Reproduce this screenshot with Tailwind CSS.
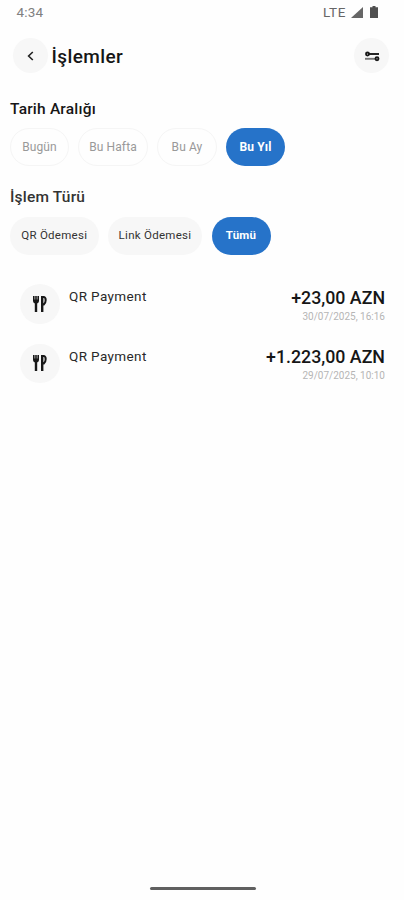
<!DOCTYPE html>
<html lang="tr">
<head>
<meta charset="utf-8">
<title>İşlemler</title>
<script src="https://cdn.jsdelivr.net/npm/@tailwindcss/browser@4"></script>
</head>
<body class="bg-white">
<div class="flex h-[900px] w-[404px] flex-col overflow-hidden bg-[#fefefe] font-['Roboto',sans-serif] text-[#161616]">
  <header class="flex h-6 items-center justify-between pr-[26px] pl-[16.500px] text-[#808080]">
    <span class="text-[13.500px] leading-6 tracking-[0.150px] whitespace-nowrap">4:34</span>
    <div class="flex items-center">
      <span class="mr-[5px] text-[13.500px] leading-6 tracking-[0.600px] text-[#666]">LTE</span>
      <svg class="mr-[7px] h-[11px] w-3" viewBox="0 0 12 12" preserveAspectRatio="none" fill="#666"><path d="M12 0v12H0z"/></svg>
      <svg class="h-3 w-2" viewBox="0 0 8 12" fill="#505050"><path d="M2.500 0h3v1.300H8V12H0V1.300h2.500z"/></svg>
    </div>
  </header>
  <div class="mt-[14px] flex h-[35px] items-center pr-[15px] pl-[12.500px]">
    <button class="flex h-[35px] w-[35px] items-center justify-center rounded-full bg-[#f7f7f7]">
      <svg class="h-[10px] w-[7px]" viewBox="0 0 7 10" fill="none" stroke="#222" stroke-width="1.600"><path d="M5.800 1 1.600 5l4.200 4"/></svg>
    </button>
    <h1 class="ml-[4px] pt-[2px] text-[19px] leading-6 font-medium tracking-[0.400px] whitespace-nowrap">İşlemler</h1>
    <button class="ml-auto flex h-[35px] w-[35px] items-center justify-center rounded-full bg-[#f7f7f7]">
      <svg class="h-[12px] w-[16px]" viewBox="0 0 16 12" fill="none" stroke="#181818" stroke-width="1.900"><circle cx="3.500" cy="4" r="1.500"/><path d="M5 4h10"/><path d="M1 8.800h10" stroke="#777"/><circle cx="13" cy="8.800" r="1.500"/></svg>
    </button>
  </div>
  <section class="mt-[25px] px-[10px]">
    <h2 class="h-5 pt-px text-[15.500px] leading-5 font-medium tracking-[0.200px] whitespace-nowrap">Tarih Aralığı</h2>
    <div class="mt-[10px] flex h-[38px] gap-[9px] text-[12px] tracking-[0.100px] whitespace-nowrap text-[#999]">
      <button class="w-[59px] rounded-full border border-[#f5f5f5]">Bugün</button>
      <button class="w-[70px] rounded-full border border-[#f5f5f5]">Bu Hafta</button>
      <button class="w-[60px] rounded-full border border-[#f5f5f5]">Bu Ay</button>
      <button class="w-[59px] rounded-full bg-[#2673c9] font-bold text-white">Bu Yıl</button>
    </div>
  </section>
  <section class="mt-[21px] px-[10px]">
    <h2 class="h-5 text-[15.500px] leading-5 font-medium tracking-[0.200px] whitespace-nowrap text-[#333]">İşlem Türü</h2>
    <div class="mt-[10px] flex h-[38px] gap-[9.500px] text-[11.500px] tracking-[0.280px] whitespace-nowrap text-[#333]">
      <button class="w-[88.500px] rounded-full bg-[#f7f7f7]">QR Ödemesi</button>
      <button class="w-[94px] rounded-full bg-[#f7f7f7]">Link Ödemesi</button>
      <button class="w-[59px] rounded-full bg-[#2673c9] font-bold text-white">Tümü</button>
    </div>
  </section>
  <ul class="mt-[29px] flex flex-col gap-5 pr-[19px] pl-5">
    <li class="flex h-[39.500px]">
      <span class="flex h-[39.500px] w-[39.500px] items-center justify-center rounded-full bg-[#f7f7f7]">
        <svg class="h-4 w-[14px]" viewBox="0 0 14 16" fill="#171717"><path d="M0 0h1.600v3.500h.6V0h1.600v3.500h.6V0H6v5q0 2-1.800 2.400V16H1.800V7.400Q0 7 0 5z"/><path fill-rule="evenodd" d="M8 0h2.500Q13.700.3 13.700 4t-2.400 5.500h-.9V16H8zm2.400 2v5.200h.2q1-.4 1-3T10.600 2z"/></svg>
      </span>
      <span class="mt-[2px] ml-[9.500px] text-[13.500px] leading-5 tracking-[0.380px] whitespace-nowrap text-[#292929]">QR Payment</span>
      <div class="mt-[2.500px] ml-auto text-right whitespace-nowrap">
        <p class="text-[17.800px] leading-[22px] font-medium">+23,00 AZN</p>
        <p class="mt-px text-[10px] leading-[14px] text-[#b5b5b5]">30/07/2025, 16:16</p>
      </div>
    </li>
    <li class="flex h-[39.500px]">
      <span class="flex h-[39.500px] w-[39.500px] items-center justify-center rounded-full bg-[#f7f7f7]">
        <svg class="h-4 w-[14px]" viewBox="0 0 14 16" fill="#171717"><path d="M0 0h1.600v3.500h.6V0h1.600v3.500h.6V0H6v5q0 2-1.800 2.400V16H1.800V7.400Q0 7 0 5z"/><path fill-rule="evenodd" d="M8 0h2.500Q13.700.3 13.700 4t-2.400 5.500h-.9V16H8zm2.400 2v5.200h.2q1-.4 1-3T10.600 2z"/></svg>
      </span>
      <span class="mt-[2px] ml-[9.500px] text-[13.500px] leading-5 tracking-[0.380px] whitespace-nowrap text-[#292929]">QR Payment</span>
      <div class="mt-[2px] ml-auto text-right whitespace-nowrap">
        <p class="text-[17.800px] leading-[22px] font-medium">+1.223,00 AZN</p>
        <p class="mt-px text-[10px] leading-[14px] text-[#b5b5b5]">29/07/2025, 10:10</p>
      </div>
    </li>
  </ul>
  <div class="mt-auto mr-auto mb-[10px] ml-[149.500px] h-[3px] w-[106px] rounded-full bg-[#606060]"></div>
</div>
</body>
</html>
